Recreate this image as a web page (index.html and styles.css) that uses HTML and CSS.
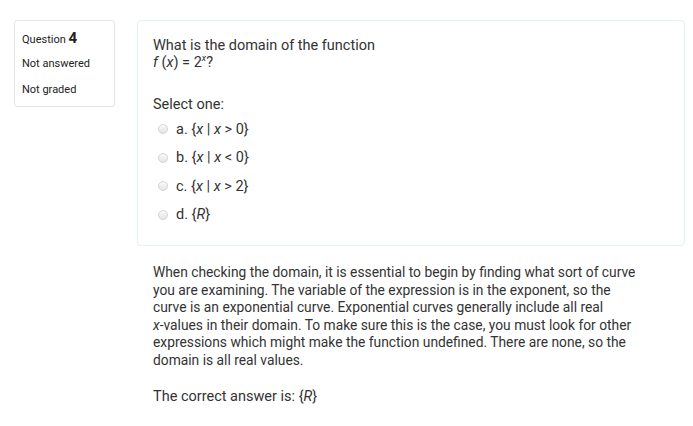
FILE: index.html
```html
<!DOCTYPE html>
<html lang="en">

<head>
    <meta charset="UTF-8">
    <title>Quiz review</title>
    <link rel="stylesheet" href="styles.css">
</head>

<body>
    <div class="question">
        <!-- Question info -->
        <div class="info">
            <h3 class="qno">Question <span>4</span></h3>
            <div class="state">Not answered</div>
            <div class="grade">Not graded</div>
        </div>

        <!-- Question content -->
        <div class="content">
            <div class="formulation">
                <p class="qtext">What is the domain of the function<br><i>f</i> (<i>x</i>) = 2<sup><i>x</i></sup>?</p>
                <div class="prompt">Select one:</div>
                <div class="answer">
                    <label class="option"><span class="radio"></span><span>a. {<i>x</i> | <i>x</i> &gt; 0}</span></label>
                    <label class="option"><span class="radio"></span><span>b. {<i>x</i> | <i>x</i> &lt; 0}</span></label>
                    <label class="option"><span class="radio"></span><span>c. {<i>x</i> | <i>x</i> &gt; 2}</span></label>
                    <label class="option"><span class="radio"></span><span>d. {<i>R</i>}</span></label>
                </div>
            </div>

            <div class="outcome">
                <p class="feedback">When checking the domain, it is essential to begin by finding what sort of curve you are examining. The variable of the expression is in the exponent, so the curve is an exponential curve. Exponential curves generally include all real <span class="nowrap"><i>x</i>-values</span> in their domain. To make sure this is the case, you must look for other expressions which might make the function undefined. There are none, so the domain is all real values.</p>
                <p class="right-answer">The correct answer is: {<i>R</i>}</p>
            </div>
        </div>
    </div>
</body>

</html>
```

FILE: styles.css
```css
/* Reset & Fonts */
* {
    margin: 0;
    padding: 0;
    box-sizing: border-box;
}

body {
    background-color: #fff;
    color: #333;
    font-family: Roboto, 'Liberation Sans', sans-serif;
    font-size: 14.5px;
}

/* Question layout */
.question {
    display: flex;
    align-items: flex-start;
    gap: 22px;
    padding: 20px 8px 0 14px;
}

/* Info box */
.info {
    width: 101px;
    height: 87px;
    flex-shrink: 0;
    border: 1px solid #e6e6e6;
    border-radius: 3px;
    padding: 8px 7px;
    font-size: 11px;
    color: #222;
}

.qno {
    font-size: 11px;
    font-weight: normal;
    line-height: 18px;
}

.qno span {
    font-size: 15px;
    font-weight: bold;
}

.state {
    margin-top: 8px;
}

.grade {
    margin-top: 13px;
}

/* Content */
.content {
    flex: 1;
}

.formulation {
    border: 1px solid #e2f2f6;
    border-radius: 4px;
    padding: 16px 15px 25px;
    height: 226px;
}

.qtext {
    line-height: 17px;
}

.qtext sup {
    font-size: 9px;
    line-height: 0;
}

.prompt {
    margin-top: 25px;
    line-height: 17px;
}

.answer {
    padding-left: 5px;
    margin-top: 2px;
}

.option {
    display: flex;
    align-items: center;
    height: 28.5px;
}

.radio {
    width: 10px;
    height: 10px;
    border-radius: 50%;
    border: 1px solid #d4d4d4;
    background: linear-gradient(#fafafa, #e4e4e4);
    margin-right: 8px;
}

/* Feedback */
.outcome {
    padding: 18px 16px 0;
    line-height: 17.6px;
}

.feedback {
    max-width: 489px;
    font-size: 13.8px;
}

.nowrap {
    white-space: nowrap;
}

.right-answer {
    margin-top: 18px;
}
```
